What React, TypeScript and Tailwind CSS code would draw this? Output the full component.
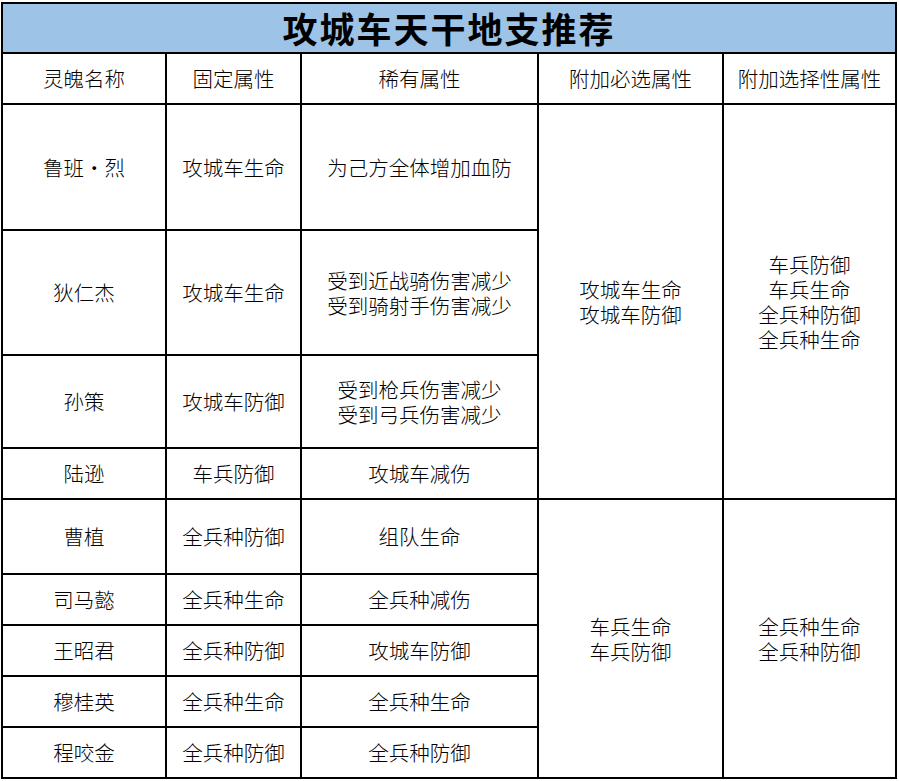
import { Fragment } from "react";

const font = { fontFamily: '"Noto Sans CJK SC", "Noto Sans", sans-serif' };

const rowsA: [string, string, string[]][] = [
  ["鲁班•烈", "攻城车生命", ["为己方全体增加血防"]],
  ["狄仁杰", "攻城车生命", ["受到近战骑伤害减少", "受到骑射手伤害减少"]],
  ["孙策", "攻城车防御", ["受到枪兵伤害减少", "受到弓兵伤害减少"]],
  ["陆逊", "车兵防御", ["攻城车减伤"]],
];

const rowsB: [string, string, string][] = [
  ["曹植", "全兵种防御", "组队生命"],
  ["司马懿", "全兵种生命", "全兵种减伤"],
  ["王昭君", "全兵种防御", "攻城车防御"],
  ["穆桂英", "全兵种生命", "全兵种生命"],
  ["程咬金", "全兵种防御", "全兵种防御"],
];

const C = ({ lines, className = "" }: { lines: string[]; className?: string }) => (
  <div className={`bg-white flex flex-col items-center justify-center text-[20.5px] leading-[25px] font-light text-black ${className}`}>
    {lines.map((l, i) => (
      <span key={i}>{l}</span>
    ))}
  </div>
);

export default function App() {
  return (
    <div className="w-[899px] h-[781px] bg-white pt-[2px] pl-[1px]" style={font}>
      <div className="grid w-[896px] grid-cols-[162px_133px_235px_183px_171px] grid-rows-[48px_49px_124px_123px_91px_49px_73px_49px_49px_49px_49px] gap-[2px] p-[2px] bg-black">
        <div className="col-span-5 bg-[#9dc3e6] flex items-center justify-center text-[35px] font-bold text-black tracking-[2px]">
          攻城车天干地支推荐
        </div>
        {["灵魄名称", "固定属性", "稀有属性", "附加必选属性", "附加选择性属性"].map((h) => (
          <C key={h} lines={[h]} />
        ))}

        {rowsA.map(([n, f, r], i) => (
          <Fragment key={`a${i}`}>
            <C lines={[n]} className="col-start-1" />
            <C lines={[f]} />
            <C lines={r} />
            {i === 0 && (
              <>
                <C lines={["攻城车生命", "攻城车防御"]} className="row-span-4" />
                <C lines={["车兵防御", "车兵生命", "全兵种防御", "全兵种生命"]} className="row-span-4" />
              </>
            )}
          </Fragment>
        ))}

        {rowsB.map(([n, f, r], i) => (
          <Fragment key={`b${i}`}>
            <C lines={[n]} className="col-start-1" />
            <C lines={[f]} />
            <C lines={[r]} />
            {i === 0 && (
              <>
                <C lines={["车兵生命", "车兵防御"]} className="row-span-5" />
                <C lines={["全兵种生命", "全兵种防御"]} className="row-span-5" />
              </>
            )}
          </Fragment>
        ))}
      </div>
    </div>
  );
}
